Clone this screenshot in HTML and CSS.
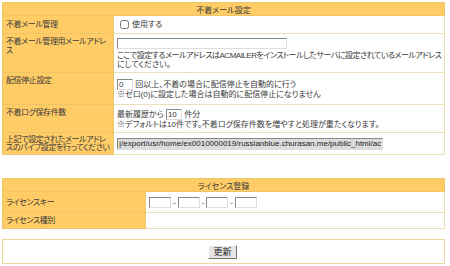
FILE: index.html
```html
<!DOCTYPE html>
<html>
<head>
  <meta charset="UTF-8">
  <title>不着メール設定</title>
  <link rel="stylesheet" href="styles.css">
</head>
<body>
  <form class="settings">
    <table class="box box-mail">
      <colgroup>
        <col class="col-label">
        <col>
      </colgroup>
      <tr>
        <th colspan="2" class="box-title">不着メール設定</th>
      </tr>
      <tr class="row-check">
        <td class="label">不着メール管理</td>
        <td class="value">
          <label class="check"><input type="checkbox" class="checkbox"> 使用する</label>
        </td>
      </tr>
      <tr class="row-address">
        <td class="label">不着メール管理用メールアドレ<br>ス</td>
        <td class="value">
          <input type="text" class="text text-address"><br>
          <span class="tight">ここで設定するメールアドレスはACMAILERをインストールしたサーバに設定されているメールアドレス</span><br>にしてください。
        </td>
      </tr>
      <tr class="row-stop">
        <td class="label">配信停止設定</td>
        <td class="value">
          <input type="text" class="text text-small" value="0"> 回以上、不着の場合に配信停止を自動的に行う<br>
          ※ゼロ(0)に設定した場合は自動的に配信停止になりません
        </td>
      </tr>
      <tr class="row-log">
        <td class="label">不着ログ保存件数</td>
        <td class="value">
          最新履歴から <input type="text" class="text text-small" value="10"> 件分<br>
          ※デフォルトは10件です。不着ログ保存件数を増やすと処理が重たくなります。
        </td>
      </tr>
      <tr class="row-pipe">
        <td class="label">上記で設定されたメールアドレ<br>スのパイプ設定を行ってください</td>
        <td class="value">
          <input type="text" class="text text-pipe" readonly value="|/export/usr/home/ex0010000019/russianblue.churasan.me/public_html/acmailer/error.cgi">
        </td>
      </tr>
    </table>

    <table class="box box-license">
      <colgroup>
        <col class="col-label-wide">
        <col>
      </colgroup>
      <tr>
        <th colspan="2" class="box-title">ライセンス登録</th>
      </tr>
      <tr class="row-key">
        <td class="label">ライセンスキー</td>
        <td class="value">
          <input type="text" class="text text-key">-<input type="text" class="text text-key">-<input type="text" class="text text-key">-<input type="text" class="text text-key">
        </td>
      </tr>
      <tr class="row-kind">
        <td class="label">ライセンス種別</td>
        <td class="value"></td>
      </tr>
    </table>

    <table class="box box-submit">
      <tr>
        <td class="submit-cell"><button type="button" class="submit">更新</button></td>
      </tr>
    </table>
  </form>
</body>
</html>
```

FILE: styles.css
```css
body {
  margin: 0;
  padding: 2px;
  font-family: "Liberation Sans", "Noto Sans CJK JP", sans-serif;
  font-size: 8px;
  color: #3a3a3a;
  background: #fff;
}

.box {
  width: 443px;
  table-layout: fixed;
  border-collapse: collapse;
  border: 1px solid #ecd89a;
  font-feature-settings: "palt";
}

.col-label { width: 111px; }
.col-label-wide { width: 143px; }

.box-license {
  margin-top: 23px;
}

.box-submit {
  margin-top: 10px;
}

.box-title {
  background: #ffcc66;
  font-weight: normal;
  height: 12px;
  padding: 0;
  text-align: center;
  border: 1px solid #ecc56a;
}

.label {
  background: #ffcc66;
  padding: 3px;
  vertical-align: top;
  line-height: 9px;
  letter-spacing: -0.4px;
  white-space: nowrap;
  overflow: hidden;
  border: 1px solid #ecc56a;
}

.value {
  background: #fff;
  padding: 1px 2px 1px 3px;
  line-height: 9px;
  white-space: nowrap;
  border: 1px solid #ece0b4;
}

.tight {
  letter-spacing: -0.5px;
}

.row-check { height: 18px; }
.row-address { height: 39px; }
.row-stop { height: 32px; }
.row-log { height: 28px; }
.row-pipe { height: 22px; }
.row-key { height: 21px; }
.row-kind { height: 15px; }

.row-check .label,
.row-pipe .label,
.box-license .label {
  vertical-align: middle;
}

.row-pipe .label {
  padding-top: 1px;
  padding-bottom: 1px;
  line-height: 8px;
}

.check {
  display: flex;
  align-items: center;
  gap: 3px;
  padding-left: 3px;
}

.checkbox {
  margin: 0;
  width: 9px;
  height: 9px;
}

.text {
  font: inherit;
  font-size: 8px;
  height: 11px;
  padding: 0 1px;
  margin: 0;
  border: 1px solid #888;
  border-right-color: #ddd;
  border-bottom-color: #ddd;
  box-sizing: border-box;
  vertical-align: middle;
  color: #333;
}

.text-address {
  width: 170px;
  margin-bottom: 2px;
}

.text-small {
  width: 16px;
}

.text-pipe {
  width: 266px;
  height: 12px;
  background: #dcdcdc;
  color: #222;
}

.text-key {
  width: 22px;
  margin: 0 2px;
}

.text-key:first-child {
  margin-left: 0;
}

.submit-cell {
  height: 19px;
  text-align: center;
  padding: 2px;
}

.submit {
  font: inherit;
  font-size: 9px;
  line-height: 10px;
  padding: 0 4px;
  height: 14px;
  background: #e4e4e4;
  border: 1px solid;
  border-color: #fff #777 #777 #fff;
  color: #222;
  margin-left: -2px;
}
```
